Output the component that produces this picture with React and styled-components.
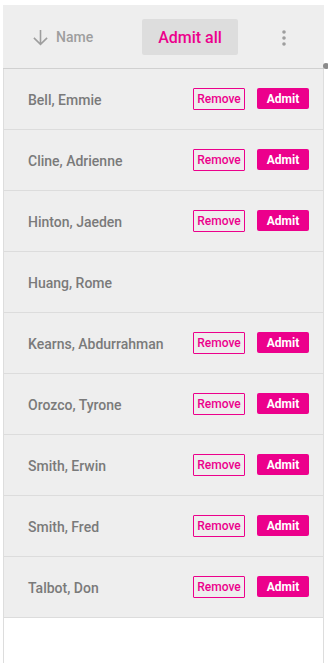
import React from 'react';
import styled, { createGlobalStyle } from 'styled-components';

const people = [
  { name: 'Bell, Emmie', pending: true },
  { name: 'Cline, Adrienne', pending: true },
  { name: 'Hinton, Jaeden', pending: true },
  { name: 'Huang, Rome', pending: false },
  { name: 'Kearns, Abdurrahman', pending: true },
  { name: 'Orozco, Tyrone', pending: true },
  { name: 'Smith, Erwin', pending: true },
  { name: 'Smith, Fred', pending: true },
  { name: 'Talbot, Don', pending: true },
];

const GlobalStyle = createGlobalStyle`
  html, body {
    margin: 0;
    padding: 0;
    background: #ffffff;
    font-family: Roboto, "Liberation Sans", sans-serif;
  }
`;

const App = () => {
  return (
    <>
      <GlobalStyle />
      <Page>
        <Panel>
          <Toolbar>
            <SortButton>
              <svg width="17" height="17" viewBox="0 0 16 16" fill="none">
                <path d="M8 1v13.5M1.8 8.3l6.2 6.2 6.2-6.2" stroke="#9e9e9e" strokeWidth="1.5" />
              </svg>
              <span>Name</span>
            </SortButton>
            <AdmitAll>Admit all</AdmitAll>
            <MenuButton>
              <svg width="4" height="16" viewBox="0 0 4 16">
                <circle cx="2" cy="2" r="1.8" fill="#9e9e9e" />
                <circle cx="2" cy="8" r="1.8" fill="#9e9e9e" />
                <circle cx="2" cy="14" r="1.8" fill="#9e9e9e" />
              </svg>
            </MenuButton>
          </Toolbar>
          <List>
            {people.map((p) => (
              <Row key={p.name}>
                <Name>{p.name}</Name>
                {p.pending && (
                  <Actions>
                    <RemoveButton>Remove</RemoveButton>
                    <AdmitButton>Admit</AdmitButton>
                  </Actions>
                )}
              </Row>
            ))}
          </List>
          <ScrollDot />
        </Panel>
      </Page>
    </>
  );
};

export default App;

const Page = styled.div`
  padding: 5px 4px 0 3px;
  height: 658px;
  overflow: hidden;
`;

const Panel = styled.div`
  position: relative;
  display: flex;
  flex-direction: column;
  height: 100%;
`;

const Toolbar = styled.div`
  display: flex;
  align-items: center;
  height: 64px;
  background: #eeeeee;
  border-bottom: 1px solid #d0d0d0;
  box-sizing: border-box;
  padding-left: 29px;
`;

const SortButton = styled.div`
  display: flex;
  align-items: center;
  gap: 7px;
  width: 110px;
  color: #9e9e9e;
  font-size: 14px;
  font-weight: 500;
  svg {
    margin-top: 1px;
  }
`;

const AdmitAll = styled.button`
  width: 96px;
  height: 36px;
  border: none;
  border-radius: 2px;
  background: #dddddd;
  color: #ec008c;
  font-family: Roboto, "Liberation Sans", sans-serif;
  font-size: 16px;
  font-weight: 500;
  padding: 0;
  margin-top: 1px;
`;

const MenuButton = styled.div`
  display: flex;
  margin-left: 44px;
  margin-top: 2px;
`;

const List = styled.div`
  flex: 1;
  border-left: 1px solid #dddddd;
  border-right: 1px solid #dddddd;
`;

const Row = styled.div`
  display: flex;
  align-items: center;
  height: 61px;
  box-sizing: border-box;
  background: #eeeeee;
  border-bottom: 1px solid #dcdcdc;
  padding: 0 14px 0 24px;
`;

const Name = styled.div`
  flex: 1;
  color: #7a7a7a;
  font-size: 14px;
  font-weight: 500;
  margin-top: 1px;
`;

const Actions = styled.div`
  display: flex;
  align-items: center;
  gap: 12px;
`;

const RemoveButton = styled.button`
  width: 52px;
  height: 22px;
  box-sizing: border-box;
  border: 1px solid #ec008c;
  border-radius: 1px;
  background: transparent;
  color: #ec008c;
  font-family: Roboto, "Liberation Sans", sans-serif;
  font-size: 12px;
  font-weight: 500;
  padding: 0;
`;

const AdmitButton = styled.button`
  width: 52px;
  height: 21px;
  border: none;
  border-radius: 2px;
  background: #ec008c;
  color: #ffffff;
  font-family: Roboto, "Liberation Sans", sans-serif;
  font-size: 12px;
  font-weight: 700;
  padding: 0;
  margin-bottom: 1px;
`;

const ScrollDot = styled.div`
  position: absolute;
  right: -5px;
  top: 58px;
  width: 6px;
  height: 6px;
  border-radius: 50%;
  background: #8a8a8a;
`;
